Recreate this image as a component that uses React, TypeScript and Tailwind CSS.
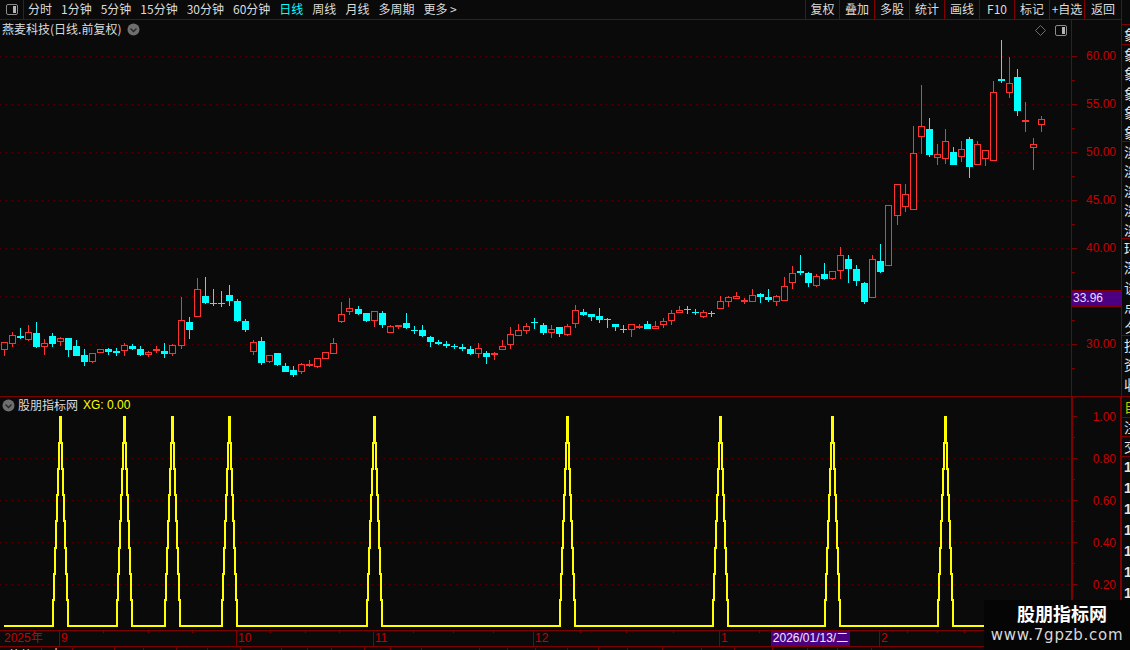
import React from "react";

type C = [number, number, number, number, number, 0 | 1];
// zoom-space data: [x, wickTop, wickBottom, bodyTop, bodyBottom, isCyan]
const g1: C[] = [
  [13,217,257,217,239,0],[37,187,230,196,223,0],[61,175,207,198,204,1],[85,165,212,187,209,0],[109,156,233,190,230,1],
  [133,208,254,220,232,0],[157,190,230,198,221,1],[181,200,228,205,217,0],[205,204,260,204,239,1],[229,210,258,228,257,1],
  [253,237,287,255,275,1],[277,250,278,250,277,0],[301,238,250,238,250,0],[325,234,254,237,245,1],[349,235,257,243,248,1],
  [373,220,258,226,244,0],[397,222,239,228,236,1],[421,228,258,237,254,1],[445,244,260,245,256,0],[469,229,248,238,241,0],
  [493,219,263,243,251,1],[517,223,257,226,253,0],[545,81,236,151,227,0],[569,141,207,156,179,1],[592,24,140,58,140,0],
  [616,21,102,78,99,1],[640,57,107,99,103,1],[664,63,110,99,102,1],[688,45,108,75,93,1],[712,87,155,93,152,1],
  [736,148,185,153,179,1],[760,210,254,217,245,0],[784,201,285,213,278,1],[808,255,278,256,275,0],[832,249,288,249,285,1],
  [856,280,305,288,305,1],[880,289,320,300,315,1],[904,279,311,283,305,0],[928,270,290,283,289,0],[952,265,293,265,290,0],
  [976,247,266,247,266,0],[1000,205,251,220,251,0],
];
const g2: C[] = [
  [4,66,128,103,125,0],[28,54,105,85,95,0],[55,78,106,87,102,1],[79,99,125,99,122,1],[103,92,140,94,124,0],
  [127,94,144,99,134,1],[151,135,158,139,158,0],[175,136,148,136,142,0],[199,99,146,129,144,1],[223,138,162,149,152,1],
  [247,135,170,150,167,1],[271,168,201,171,186,1],[295,180,196,186,191,1],[319,183,204,193,197,1],[343,191,208,197,201,1],
  [367,192,212,202,206,1],[391,198,226,207,222,1],[415,189,234,205,221,0],[439,213,252,219,231,1],[463,216,240,220,224,0],
  [487,180,210,199,209,0],[511,141,207,163,194,0],[535,132,167,151,167,0],[559,129,162,138,153,0],[583,114,148,127,130,1],
  [610,129,165,135,159,1],[634,136,174,148,158,0],[658,141,171,141,162,1],[682,132,167,138,164,0],[706,75,144,90,131,0],
  [730,87,108,96,105,1],[754,102,124,102,111,1],[778,84,129,108,120,1],[802,114,144,118,121,1],[826,132,153,132,141,1],
  [850,135,159,147,150,1],[874,133,171,133,149,0],[898,132,147,138,143,0],[922,123,147,132,147,1],[946,123,147,139,146,0],
  [970,114,144,123,136,0],[994,90,135,99,122,0],[1018,78,99,90,98,0],[1042,78,102,88,91,1],[1066,87,105,96,99,1],
  [1090,90,114,97,110,0],[1114,93,111,100,103,1],
];
const g3: C[] = [
  [61,648,686,664,686,0],[85,648,681,652,665,0],[109,636,657,649,656,0],[133,654,671,660,664,0],[157,627,665,646,665,0],
  [181,640,669,643,651,1],[205,627,665,651,660,1],[229,645,678,649,665,0],[253,591,662,619,662,0],[277,558,627,580,608,0],
  [301,525,585,573,580,1],[325,576,621,579,609,1],[349,582,621,589,618,0],[373,549,600,582,597,1],[397,574,600,574,597,0],
  [421,501,597,526,572,0],[445,525,609,537,567,1],[469,555,618,567,603,1],[493,606,672,609,666,1],[517,525,654,538,653,0],
  [541,492,579,543,576,1],[565,376,557,376,557,0],[592,313,435,313,407,0],[616,312,396,343,380,0],[640,138,390,220,389,0],
  [664,15,222,139,170,0],[688,114,231,147,225,1],[712,192,255,223,233,0],[736,147,252,184,236,0],[760,201,255,216,255,1],
  [784,183,246,208,230,0],[808,171,294,177,261,1],[832,183,255,193,254,0],[856,211,258,211,236,0],[880,3,243,37,242,0],
];
const g4: C[] = [
  [664,120,250,238,243,1],[688,171,295,250,278,0],[712,207,348,231,332,1],[736,306,396,360,365,0],[784,348,396,358,374,0],
];
const g5: C[] = [[1000,174,270,193,203,0]];

const conv = (list: C[], ox: number, oy: number) =>
  list.map(([x, a, b, c, d, k]) => ({
    x: ox + Math.floor(x / 3),
    wt: Math.round(oy + a / 3),
    wb: Math.round(oy + b / 3),
    bt: Math.round(oy + c / 3),
    bb: Math.round(oy + d / 3),
    cyan: !!k,
  }));

const candles = [
  ...conv(g1, 0, 270),
  ...conv(g2, 340, 280),
  ...conv(g3, 700, 80),
  ...conv(g4, 780, 0),
  ...conv(g5, 700, 80),
];

const peaks = [60.5, 124.5, 172.5, 229.5, 374.5, 567.5, 720.5, 832.5, 945.5];
const levels = [626, 600, 574, 548, 521, 495, 469, 443, 417];

const linePoints = () => {
  const pts: string[] = ["4,626"];
  peaks.forEach((c) => {
    const l = c - 7.5;
    const r = c + 7.5;
    for (let i = 0; i < 8; i++) {
      pts.push(`${l + i},${levels[i]}`);
      pts.push(`${l + i},${levels[i + 1]}`);
    }
    for (let i = 7; i >= 0; i--) {
      pts.push(`${r - i},${levels[i + 1]}`);
      pts.push(`${r - i},${levels[i]}`);
    }
  });
  pts.push("1000,626");
  return pts.join(" ");
};

const ChevronDot = () => (
  <svg width="13" height="13" viewBox="0 0 13 13" className="shrink-0">
    <circle cx="6.5" cy="6.5" r="6" fill="#6e6e6e" />
    <path d="M3.5 5.5 L6.5 8.5 L9.5 5.5" fill="none" stroke="#262626" strokeWidth="1.3" />
  </svg>
);

const PanelIcon = () => (
  <svg width="12" height="11" viewBox="0 0 12 11" className="shrink-0">
    <rect x="0.5" y="0.5" width="11" height="10" rx="1.5" fill="none" stroke="#8c8c8c" />
    <rect x="7" y="2" width="3" height="7" fill="#b4b4b4" />
  </svg>
);

const leftTabs = ["分时", "1分钟", "5分钟", "15分钟", "30分钟", "60分钟", "日线", "周线", "月线", "多周期", "更多 >"];
const rightTabs: [string, string][] = [
  ["复权", "w-[34px]"], ["叠加", "w-[35px]"], ["多股", "w-[35px]"], ["统计", "w-[35px]"], ["画线", "w-[35px]"],
  ["F10", "w-[35px]"], ["标记", "w-[35px]"], ["+自选", "w-[35px]"], ["返回", "w-[37px]"],
];
const prices = ["60.00", "55.00", "50.00", "45.00", "40.00", "", "30.00"];
const subs = ["1.00", "0.80", "0.60", "0.40", "0.20"];

const rightCells: { t: string; h: string; c?: string }[] = [
  { t: "", h: "h-[25px]" },
  { t: "象", h: "h-[20px]" },
  { t: "象象象象象", h: "h-[97px]" },
  { t: "淡淡淡淡淡", h: "h-[97px]" },
  { t: "环深谈点夕", h: "h-[97px]" },
  { t: "技资收", h: "h-[61px]" },
  { t: "自", h: "h-[21px]", c: "text-[#c8c800]" },
  { t: "注", h: "h-[19px]" },
  { t: "交", h: "h-[20px]" },
];

const stripSeps = [42, 31, 42, 29, 33, 31, 33, 41, 26, 24, 33, 26, 31, 58, 28, 28, 32, 31, 29, 35, 39, 33, 38, 35, 30, 34];

export default function App() {
  return (
    <div className="w-[1130px] h-[650px] bg-[#0a0a0a] overflow-hidden relative flex font-['Liberation_Sans','Noto_Sans_CJK_SC',sans-serif] text-[12px] text-[#dcdcdc]">
      <div className="w-[1121px] h-full flex flex-col">
        {/* top bar */}
        <div className="h-[20px] flex items-stretch border-b border-[#800000] leading-[18px]">
          <div className="w-[24px] flex items-center justify-center border-r border-[#800000] pl-[1px] pb-[1px]">
            <PanelIcon />
          </div>
          <div className="flex gap-[9px] pl-[4px] font-['Noto_Sans_CJK_SC',sans-serif]">
            {leftTabs.map((t) => (
              <span key={t} className={t === "日线" ? "text-[#00ffff] whitespace-pre" : "whitespace-pre"}>{t}</span>
            ))}
          </div>
          <div className="flex ml-auto font-['Noto_Sans_CJK_SC',sans-serif]">
            {rightTabs.map(([t, w]) => (
              <span key={t} className={`${w} border-l border-[#800000] text-center whitespace-nowrap`}>{t}</span>
            ))}
          </div>
        </div>

        {/* price panel */}
        <div className="h-[377px] flex border-b border-[#800000]">
          <div className="w-[1071px] relative">
            <svg className="absolute inset-0" width="1071" height="376" viewBox="0 20 1071 376" shapeRendering="crispEdges">
              {[56, 104, 152, 200, 248, 296, 344].map((y) => (
                <line key={y} x1="0" x2="1070" y1={y + 0.5} y2={y + 0.5} stroke="#5a0000" strokeDasharray="1 5" />
              ))}
              {candles.map((k, i) => (
                <g key={i}>
                  <rect x={k.x} y={k.wt} width="1" height={Math.max(1, k.wb - k.wt)} fill={k.cyan ? "#00ffff" : "#ff3232"} />
                  {k.cyan ? (
                    <rect x={k.x - 3} y={k.bt} width="7" height={Math.max(1, k.bb - k.bt)} fill="#00ffff" />
                  ) : (
                    <rect x={k.x - 2.5} y={k.bt + 0.5} width="6" height={Math.max(1, k.bb - k.bt - 1)} fill="#0a0a0a" stroke="#ff3232" />
                  )}
                </g>
              ))}
            </svg>
            <div className="relative flex items-center h-[18px] pl-[2px] gap-[6px] font-['Noto_Sans_CJK_SC',sans-serif]">
              <span>燕麦科技(日线.前复权)</span>
              <ChevronDot />
              <div className="ml-auto flex items-center gap-[9px] pr-[4px] mt-[2px]">
                <svg width="11" height="11" viewBox="0 0 11 11">
                  <path d="M5.5 0.5 L10.5 5.5 L5.5 10.5 L0.5 5.5 Z" fill="none" stroke="#6e6e6e" />
                </svg>
                <PanelIcon />
              </div>
            </div>
          </div>
          <div className="w-[50px] border-l border-[#800000] relative flex flex-col gap-[34px] pt-[29px] text-[#c80000]">
            <svg className="absolute inset-0" width="6" height="376" viewBox="0 20 6 376" shapeRendering="crispEdges">
              {[56, 104, 152, 200, 248, 296, 344].map((y) => (
                <rect key={y} x="0" y={y} width="5" height="1" fill="#800000" />
              ))}
              {[80, 128, 176, 224, 272, 320, 368].map((y) => (
                <rect key={y} x="0" y={y} width="3" height="1" fill="#800000" />
              ))}
            </svg>
            {prices.map((p, i) => (
              <div key={i} className="h-[14px] leading-[14px] text-right pr-[5px]">{p}</div>
            ))}
            <div className="absolute left-0 right-0 top-[270px] h-[17px] bg-[#4b0082] border-y border-[#800000] text-[#e6dcff] leading-[15px] pl-[1px]">33.96</div>
          </div>
        </div>

        {/* indicator panel */}
        <div className="h-[233px] flex">
          <div className="w-[1071px] relative">
            <svg className="absolute inset-0" width="1071" height="233" viewBox="0 397 1071 233" shapeRendering="crispEdges">
              {[458, 500, 542, 584].map((y) => (
                <line key={y} x1="0" x2="1070" y1={y + 0.5} y2={y + 0.5} stroke="#5a0000" strokeDasharray="1 5" />
              ))}
              <polyline points={linePoints()} fill="none" stroke="#ffff00" strokeWidth="2" />
            </svg>
            <div className="relative flex items-center h-[16px] pl-[2px] gap-[3px]">
              <ChevronDot />
              <span className="font-['Noto_Sans_CJK_SC',sans-serif]">股朋指标网</span>
              <span className="text-[#ffff00] ml-[2px]">XG: 0.00</span>
            </div>
          </div>
          <div className="w-[50px] border-l-2 border-r border-[#800000] relative flex flex-col gap-[28px] pt-[13px] text-[#c80000]">
            <svg className="absolute inset-0" width="6" height="233" viewBox="0 397 6 233" shapeRendering="crispEdges">
              {[416, 458, 500, 542, 584].map((y) => (
                <rect key={y} x="0" y={y} width="4" height="1" fill="#800000" />
              ))}
              {[437, 479, 521, 563, 605].map((y) => (
                <rect key={y} x="0" y={y} width="2" height="1" fill="#800000" />
              ))}
            </svg>
            {subs.map((p) => (
              <div key={p} className="h-[14px] leading-[14px] text-right pr-[4px]">{p}</div>
            ))}
          </div>
        </div>

        {/* date axis */}
        <div className="h-[17px] border-y border-[#800000] relative flex text-[#c80000] leading-[15px] w-[1121px]">
          <svg className="absolute inset-0" width="1121" height="4" shapeRendering="crispEdges">
            {[103, 148, 192, 270, 305, 339, 413, 453, 493, 580, 626, 673, 759, 907, 937, 964].map((x) => (
              <rect key={x} x={x} y="0" width="1" height="2" fill="#800000" />
            ))}
          </svg>
          <span className="w-[60px] border-r border-[#800000] pl-[4px]">2025年</span>
          <span className="w-[177px] border-r border-[#800000] pl-[1px]">9</span>
          <span className="w-[137px] border-r border-[#800000] pl-[1px]">10</span>
          <span className="w-[160px] border-r border-[#800000] pl-[1px]">11</span>
          <span className="w-[186px] border-r border-[#800000] pl-[1px]">12</span>
          <span className="w-[160px] border-r border-[#800000] pl-[1px]">1</span>
          <span className="pl-[1px]">2</span>
          <span className="absolute left-[771px] top-0 h-[15px] w-[79px] bg-[#4b0082] text-[#f0e8ff] text-center whitespace-nowrap border-x border-[#800000] font-['Liberation_Sans','Noto_Sans_CJK_SC',sans-serif]">2026/01/13/二</span>
        </div>

        {/* clipped status strip */}
        <div className="h-[3px] overflow-hidden flex leading-[14px] pt-[1px]">
          {stripSeps.map((w, i) => (
            <span key={i} style={{ width: w }} className="shrink-0 border-r border-[#800000] overflow-hidden h-[14px] pl-[8px] whitespace-nowrap">
              {i === 0 ? "从从" : i === 1 ? "十" : ""}
            </span>
          ))}
        </div>
      </div>

      {/* clipped right column */}
      <div className="w-[9px] h-full border-l border-[#800000] overflow-hidden font-['Noto_Sans_CJK_SC',sans-serif] text-[14px] text-[#e6e6e6] leading-[19.4px]">
        {rightCells.map((c, i) => (
          <div key={i} className={`${c.h} ${c.c ?? ""} border-b border-[#800000] w-[16px] pl-[2px] overflow-hidden break-all`}>
            {c.t}
          </div>
        ))}
        <div className="pl-[2px] font-bold leading-[21px] font-['Liberation_Sans',sans-serif]">
          {Array.from({ length: 7 }).map((_, i) => (
            <div key={i}>1</div>
          ))}
        </div>
      </div>

      {/* watermark */}
      <div className="absolute left-[984px] top-[600px] w-[146px] h-[50px] bg-[#050505] flex flex-col items-center">
        <div className="text-[18px] leading-[26px] font-bold text-white font-['Noto_Sans_CJK_SC',sans-serif] ml-[10px]">股朋指标网</div>
        <div className="text-[15px] leading-[18px] text-[#d8d8d8] tracking-[0.75px] font-['DejaVu_Sans',sans-serif]">www.7gpzb.com</div>
      </div>
    </div>
  );
}
